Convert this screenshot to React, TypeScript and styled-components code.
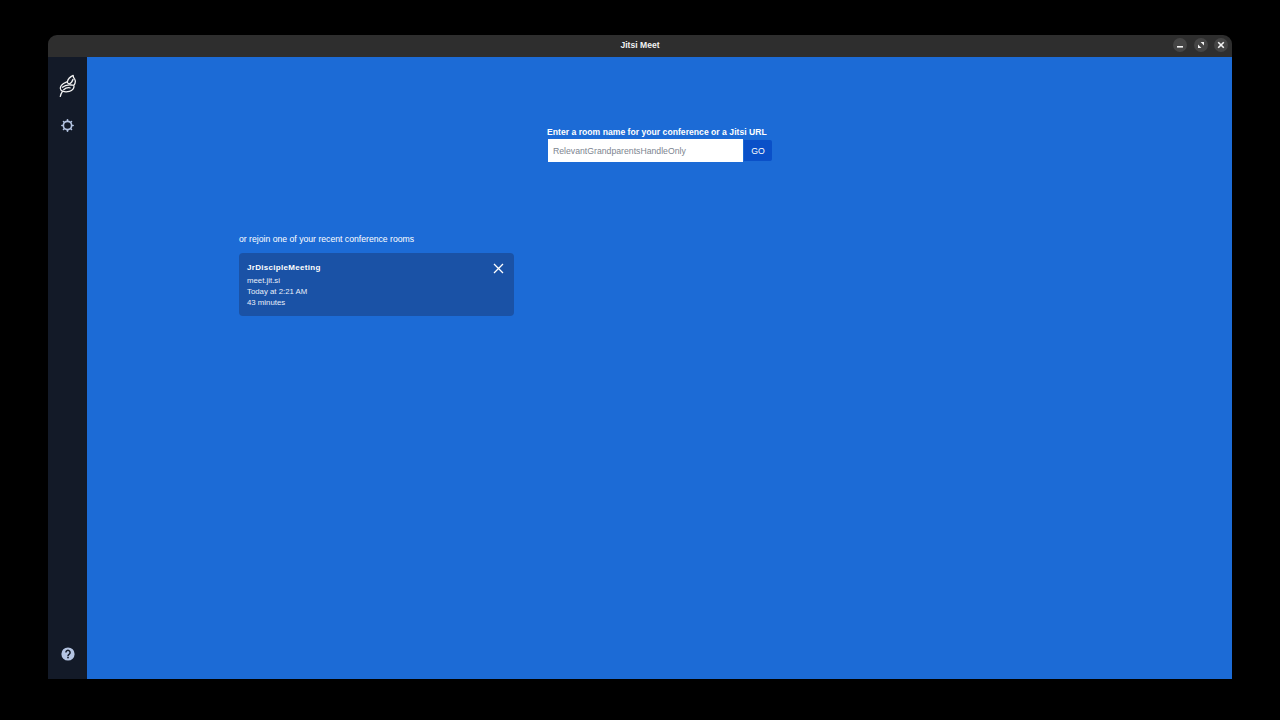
import styled, { createGlobalStyle } from 'styled-components';

const GlobalStyle = createGlobalStyle`
  html, body {
    margin: 0;
    height: 100%;
    background: #000;
    font-family: "Liberation Sans", Arial, sans-serif;
  }
`;

const Desktop = styled.div`
  width: 1280px;
  height: 720px;
  padding: 35px 48px 41px;
  box-sizing: border-box;
`;

const Window = styled.div`
  height: 100%;
  display: flex;
  flex-direction: column;
  border-radius: 9px 9px 0 0;
  overflow: hidden;
`;

const TitleBar = styled.header`
  height: 22px;
  flex: none;
  box-sizing: border-box;
  padding-bottom: 2px;
  display: grid;
  grid-template-columns: 1fr auto 1fr;
  align-items: center;
  background: #2e2e2e;
  color: #f2f2f2;
`;

const Title = styled.div`
  grid-column: 2;
  font-family: "Liberation Sans", sans-serif;
  font-size: 8.6px;
  font-weight: 700;
`;

const WindowButtons = styled.div`
  justify-self: end;
  display: flex;
  gap: 6.5px;
  padding-right: 4px;
`;

const WindowButton = styled.div`
  width: 14px;
  height: 14px;
  border-radius: 50%;
  background: #454545;
  display: flex;
  align-items: center;
  justify-content: center;
`;

const Body = styled.div`
  flex: 1;
  display: flex;
  min-height: 0;
`;

const Sidebar = styled.nav`
  width: 39px;
  flex: none;
  display: flex;
  flex-direction: column;
  align-items: center;
  background: #131a28;
  padding: 17px 0 18px;
  box-sizing: border-box;
`;

const SettingsIcon = styled.svg`
  margin-top: 21px;
`;

const HelpIcon = styled.svg`
  margin-top: auto;
`;

const Main = styled.main`
  flex: 1;
  background: #1c6bd6;
  color: #fff;
  padding: 70px 0 0 152px;
`;

const RoomForm = styled.form`
  width: 225px;
  margin: 0 0 0 308px;
  display: flex;
  flex-direction: column;
`;

const RoomLabel = styled.label`
  font-size: 8.6px;
  font-weight: 700;
  line-height: 11px;
  letter-spacing: 0.02px;
  white-space: nowrap;
`;

const RoomRow = styled.div`
  display: flex;
  align-items: center;
  margin-top: 1px;
`;

const RoomInput = styled.div`
  width: 196px;
  height: 23px;
  margin-left: 1px;
  box-sizing: border-box;
  padding-left: 5px;
  background: #fff;
  color: #7d8590;
  font-size: 8.7px;
  line-height: 24px;
`;

const GoButton = styled.div`
  width: 28px;
  height: 21px;
  margin-left: 1px;
  background: #0a50c8;
  border-radius: 0 2px 2px 0;
  color: #fff;
  font-size: 8.7px;
  line-height: 22px;
  text-align: center;
`;

const RecentHeading = styled.div`
  margin-top: 71px;
  font-size: 8.66px;
  line-height: 12px;
`;

const RecentCard = styled.div`
  position: relative;
  width: 275px;
  height: 63px;
  margin-top: 8px;
  box-sizing: border-box;
  padding: 9px 8px;
  background: #1a52a6;
  border-radius: 4px;
`;

const RoomName = styled.div`
  font-size: 8px;
  font-weight: 700;
  line-height: 11px;
  letter-spacing: 0.3px;
  margin-bottom: 2px;
`;

const RoomMeta = styled.div`
  font-size: 7.8px;
  line-height: 11px;
  color: #e8eefa;
`;

const RemoveIcon = styled.svg`
  position: absolute;
  top: 10px;
  right: 10px;
`;

const FeatherLogo = () => (
  <svg width="18" height="24" viewBox="0 0 18 24" fill="none" stroke="#f2f2f2" strokeWidth="1.3" strokeLinejoin="round">
    <path d="M1.2 22.8 C1.8 20 2.4 19 3.6 17.2" />
    <path d="M3.6 17.2 C1 16.4 .8 13.4 2.4 11.4 C3.6 9.6 6 8.6 8.4 7.6 C9 5.2 11.2 2.8 14.2 1.4 C14 3.2 14.6 3.8 15.6 5 C16.8 7 16.2 9.6 14.8 11.4 C15.6 14 13.4 16.6 10.4 17.4 C8 18 5.6 18 3.6 17.2 Z" />
    <path d="M3 13.6 C5.4 11.6 8.6 10.6 12 11 C13 11.2 14 11.2 14.8 11.4" />
    <path d="M4.4 16 C6.8 13.8 9.6 13.4 11.6 14" />
    <path d="M8.4 7.6 C8.2 8.8 9 9.6 10.4 9.8 C12 9.2 13.4 7.2 14.2 5" />
  </svg>
);

const gearTeeth = [0, 45, 90, 135, 180, 225, 270, 315];

export default function App() {
  return (
    <Desktop>
      <GlobalStyle />
      <Window>
        <TitleBar>
          <Title>Jitsi Meet</Title>
          <WindowButtons>
            <WindowButton>
              <svg width="8" height="8" viewBox="0 0 8 8">
                <rect x="1" y="5" width="6" height="1.6" fill="#f2f2f2" />
              </svg>
            </WindowButton>
            <WindowButton>
              <svg width="8" height="8" viewBox="0 0 8 8" fill="#f2f2f2">
                <path d="M3.6 1 H7 V4.4 Z" />
                <path d="M1 3.6 V7 H4.4 Z" />
              </svg>
            </WindowButton>
            <WindowButton>
              <svg width="8" height="8" viewBox="0 0 8 8" stroke="#f2f2f2" strokeWidth="1.6">
                <path d="M1.2 1.2 L6.8 6.8 M6.8 1.2 L1.2 6.8" />
              </svg>
            </WindowButton>
          </WindowButtons>
        </TitleBar>
        <Body>
          <Sidebar>
            <FeatherLogo />
            <SettingsIcon width="13" height="13" viewBox="0 0 24 24" fill="none" stroke="#b4c4e2">
              <circle cx="12" cy="12" r="7.6" strokeWidth="3" />
              {gearTeeth.map((angle) => (
                <line key={angle} x1="12" y1="3.4" x2="12" y2="1.6" strokeWidth="3" strokeLinecap="round" transform={`rotate(${angle} 12 12)`} />
              ))}
            </SettingsIcon>
            <HelpIcon width="14" height="14" viewBox="0 0 14 14">
              <circle cx="7" cy="7" r="6.6" fill="#b4c4e2" />
              <path d="M4.9 5.5a2.1 2.1 0 1 1 3.3 1.7C7.5 7.7 7 8 7 8.9" fill="none" stroke="#131a28" strokeWidth="1.5" />
              <rect x="6.2" y="9.7" width="1.6" height="1.6" fill="#131a28" />
            </HelpIcon>
          </Sidebar>
          <Main>
            <RoomForm>
              <RoomLabel>Enter a room name for your conference or a Jitsi URL</RoomLabel>
              <RoomRow>
                <RoomInput>RelevantGrandparentsHandleOnly</RoomInput>
                <GoButton>GO</GoButton>
              </RoomRow>
            </RoomForm>
            <RecentHeading>or rejoin one of your recent conference rooms</RecentHeading>
            <RecentCard>
              <RoomName>JrDiscipleMeeting</RoomName>
              <RoomMeta>meet.jit.si</RoomMeta>
              <RoomMeta>Today at 2:21 AM</RoomMeta>
              <RoomMeta>43 minutes</RoomMeta>
              <RemoveIcon width="11" height="11" viewBox="0 0 11 11" stroke="#fff" strokeWidth="1.3">
                <path d="M1 1 L10 10 M10 1 L1 10" />
              </RemoveIcon>
            </RecentCard>
          </Main>
        </Body>
      </Window>
    </Desktop>
  );
}
